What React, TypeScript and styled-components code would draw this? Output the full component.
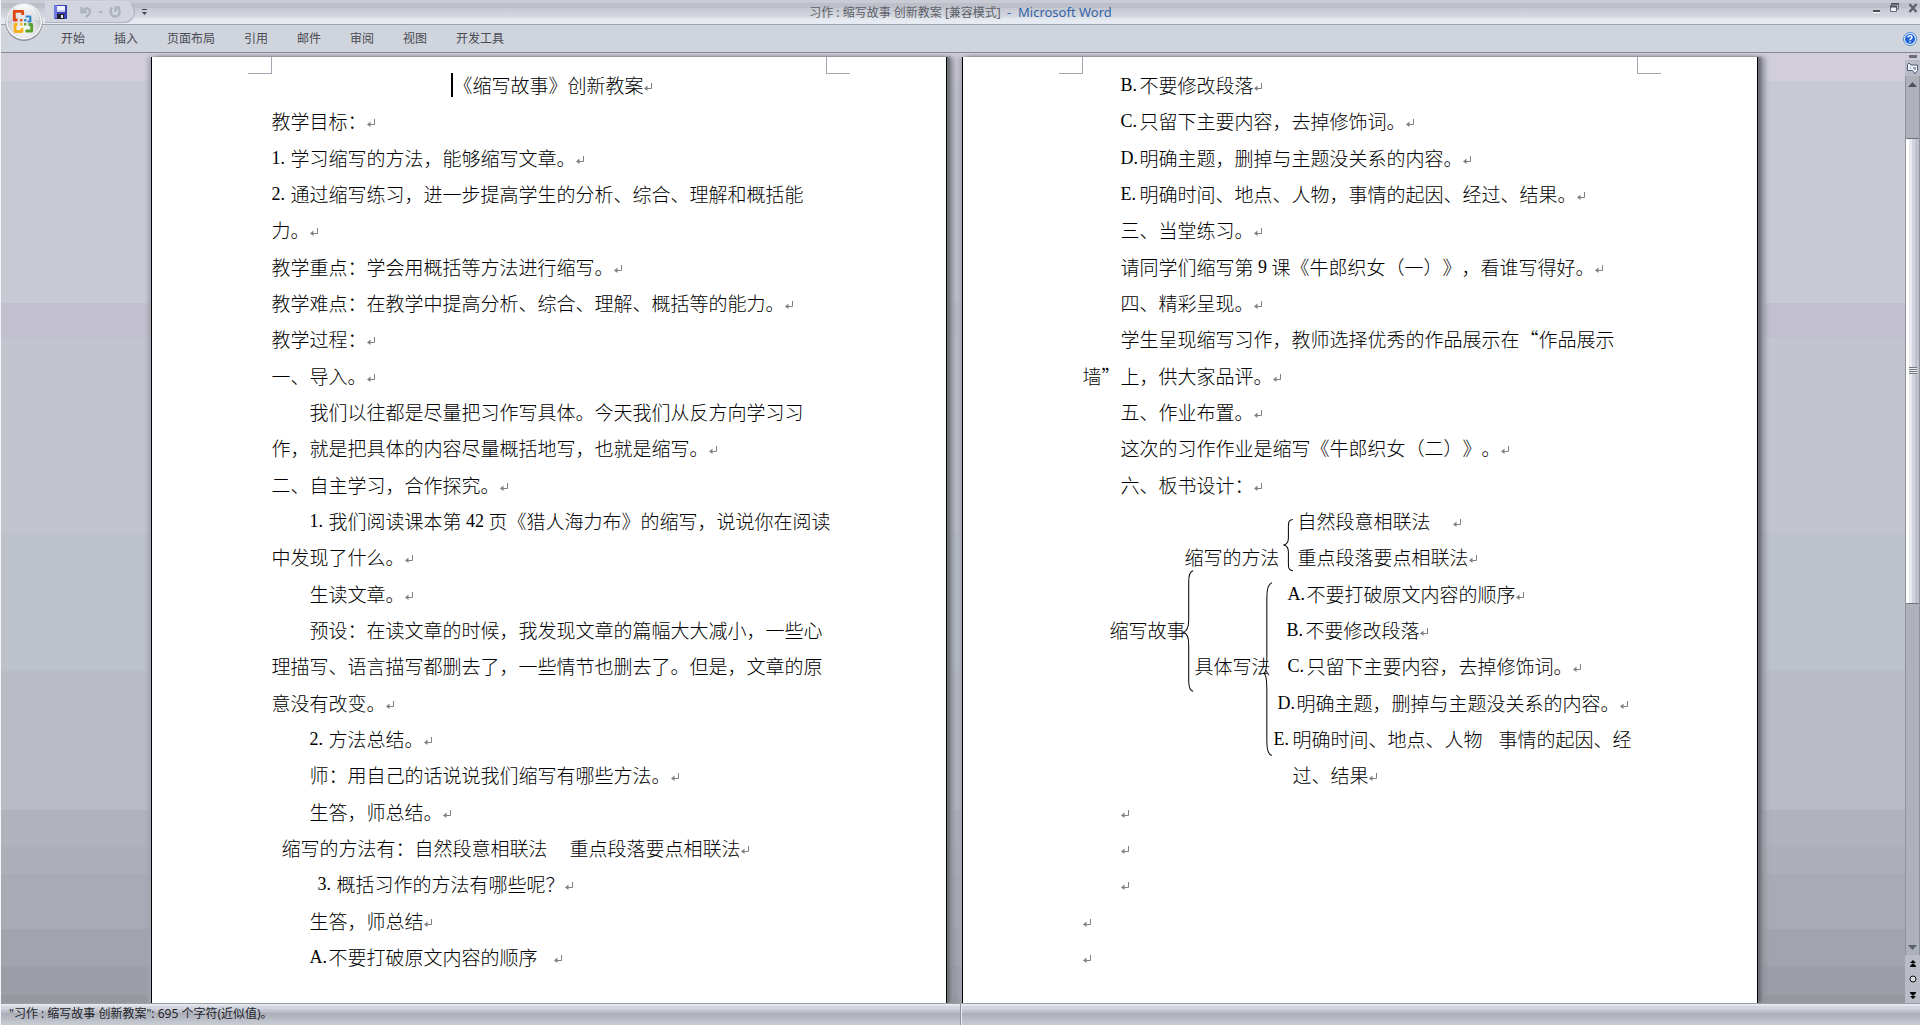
import React from "react";
import styled, { createGlobalStyle } from "styled-components";

const ui = `"Noto Sans", "Noto Sans CJK SC", sans-serif`;
const body = `"Noto Sans CJK SC", sans-serif`;
const latin = `"Liberation Serif", serif`;

const Global = createGlobalStyle`
  * { box-sizing: border-box; }
  body { margin: 0; background: #c7cad3; overflow: hidden; }
  button { font: inherit; color: inherit; border: 0; padding: 0; background: none; cursor: default; }
`;

const Window = styled.div`
  display: flex;
  flex-direction: column;
  height: 100vh;
  border-left: 1px solid #f4f5f8;
  font-family: ${ui};
  font-size: 12px;
`;

const TitleBar = styled.header`
  display: grid;
  grid-template-columns: 1fr auto 1fr;
  align-items: center;
  height: 25px;
  border-bottom: 1px solid #9fa2aa;
  background: linear-gradient(#c9ccd4 0 3px, #bdc0c8 3px 8px, #c6c9d1 8px, #d3d6de 16px, #e0e3e6 18px, #e6eaf2 20px);
  position: relative;
`;

const OfficeButton = styled.button`
  position: absolute;
  left: 3px;
  top: 2px;
  width: 40px;
  height: 40px;
  z-index: 2;
`;

const QuickAccess = styled.div`
  display: flex;
  align-items: center;
  padding-left: 44px;
`;

const QuickTools = styled.div`
  display: flex;
  align-items: center;
  height: 22px;
  width: 90px;
  padding-left: 9px;
  gap: 6px;
  border: 1px solid #b0b3bc;
  border-left: 0;
  border-top-color: #d6d9e0;
  border-radius: 0 11px 11px 0;
  background: #d2d5dd;
`;

const IconButton = styled.button`
  display: grid;
  place-items: center;
  height: 16px;
`;

const Caret = styled(IconButton)`
  margin-left: 7px;
`;

const Caption = styled.h1`
  margin: 0;
  font-size: 12px;
  font-weight: 400;
  line-height: 20px;
  color: #5c5f68;
  white-space: pre;
`;

const AppName = styled.span`
  font-size: 13px;
  color: #3465a8;
`;

const WindowButtons = styled.div`
  display: flex;
  justify-content: flex-end;
  gap: 8px;
  padding: 0 2px 8px 0;
`;

const Ribbon = styled.nav`
  display: flex;
  align-items: center;
  gap: 29px;
  height: 28px;
  padding: 0 3px 0 60px;
  background: #d0d4dc;
  border-bottom: 1px solid #868992;
  color: #484b54;
`;

const Tab = styled.button`
  line-height: 20px;
  font-size: 12px;
`;

const HelpButton = styled(IconButton)`
  margin-left: auto;
`;

const Work = styled.main`
  flex: 1;
  min-height: 0;
  display: flex;
`;

const Desk = styled.div`
  flex: 1;
  min-width: 0;
  display: flex;
  justify-content: center;
  gap: 15px;
  padding: 4px 0 0 2px;
  overflow: hidden;
  background: linear-gradient(
    #d1ceda 0 2.9%, #c7cad3 2.9% 26.3%, #c2bfce 26.3% 30%, #c2c5ce 30% 50.5%,
    #bcc1ca 50.5% 65%, #b9bcc5 65% 79.7%, #b0b3bb 79.7% 83.5%, #adb0b9 83.5% 86.4%,
    #a8abb4 86.4% 92.2%, #a1a4ac 92.2% 96.1%, #9b9ea6 96.1% 99.2%, #96989f 99.2%
  );
`;

const Sheet = styled.article`
  position: relative;
  width: 796px;
  display: grid;
  grid-template-rows: repeat(25, minmax(0, 1fr));
  padding: 10px 80px 28px 120px;
  background: #fff;
  border: solid #000;
  border-width: 0 1px;
  box-shadow: 3px 0 2px #6e7178, 7px 0 5px #90939b, -3px 0 4px #a2a5b0;
  font-family: ${body};
  font-size: 19px;
  font-weight: 300;
  color: #000;
  text-spacing-trim: space-all;
`;

const Crop = styled.span<{ $side: "left" | "right" }>`
  position: absolute;
  top: 0;
  ${(p) => p.$side}: 96px;
  width: 24px;
  height: 17px;
  border-bottom: 1px solid #a5a6b2;
  border-${(p) => (p.$side === "left" ? "right" : "left")}: 1px solid #a5a6b2;
`;

const Line = styled.p<{ $indent?: number; $center?: boolean }>`
  margin: 0;
  display: flex;
  align-items: center;
  white-space: pre;
  line-height: 28px;
  padding-left: ${(p) => p.$indent ?? 0}px;
  ${(p) => p.$center && "justify-content: center; padding-right: 34px;"}
`;

const Marker = styled.span`
  display: inline-block;
  width: 19px;
  font-family: ${latin};
  font-size: 18px;
  font-weight: 400;
`;

const Num = styled.span`
  font-family: ${latin};
  font-size: 18px;
  font-weight: 400;
`;

const Space = styled.span<{ $w: number }>`
  width: ${(p) => p.$w}px;
`;

const Label = styled.span<{ $w: number }>`
  width: ${(p) => p.$w}px;
`;

const Cursor = styled.span`
  width: 2px;
  height: 24px;
  background: #000;
`;

const Diagram = styled.section`
  position: relative;
  grid-row: span 8;
  display: grid;
  grid-template-rows: subgrid;
`;

const Braces = styled.svg`
  position: absolute;
  left: 0;
  top: 0;
  height: 100%;
`;

const PilcrowIcon = styled.svg`
  flex: none;
  margin-top: 4px;
`;

const ScrollRail = styled.aside`
  width: 15px;
  display: flex;
  flex-direction: column;
  background: #b9bcc6;
`;

const SplitHandle = styled.div`
  height: 7px;
  padding: 2px 3px 2px 4px;
  background: #d1ceda;
  &::after { content: ""; display: block; height: 3px; background: #6b6e75; }
`;

const RailButton = styled(IconButton)<{ $h: number }>`
  width: 15px;
  height: ${(p) => p.$h}px;
`;

const Track = styled.div`
  flex: 1;
  display: flex;
  flex-direction: column;
  border-left: 1px solid #8f929a;
  border-right: 1px solid #8f929a;
  background: #aeb1ba;
`;

const TrackButton = styled(IconButton)`
  width: 13px;
`;

const Room = styled.div<{ $grow: number }>`
  flex: ${(p) => p.$grow};
`;

const Thumb = styled.div<{ $grow: number }>`
  flex: ${(p) => p.$grow};
  display: grid;
  place-items: center;
  border: solid #6f727a;
  border-width: 1px 0;
  border-radius: 1px;
  background: linear-gradient(90deg, #fff 0 3px, #e9e9f2 3px 6px, #cfd6e0 6px 9px, #bfc2ca 9px);
`;

const Grip = styled.div`
  width: 8px;
  height: 7px;
  background: repeating-linear-gradient(#777a82 0 1px, #e8eaf0 1px 2px);
`;

const StatusBar = styled.footer`
  display: grid;
  grid-template-columns: 1fr 1fr;
  height: 22px;
  border-top: 1px solid #9c9fa8;
  background: linear-gradient(#e3e6ea 0 2px, #d2d5df 2px 5px, #c0c3cd 6px 8px, #abaeb7 9px, #b4b7c0 13px, #c4c8d1 19px);
  color: #22242a;
`;

const StatusText = styled.div`
  padding-left: 8px;
  line-height: 20px;
  font-size: 12px;
  border-right: 1px solid #8e919a;
`;

const StatusRest = styled.div`
  border-left: 1px solid #eceef3;
`;

const Mark = () => (
  <PilcrowIcon width="8" height="8" viewBox="0 0 8 8" aria-hidden="true">
    <path d="M7.500 0V5.500H2" fill="none" stroke="#808080" />
    <path d="M0 5.500L3.500 2.500V8Z" fill="#808080" />
  </PilcrowIcon>
);

const OfficeLogo = () => (
  <svg width="40" height="40" viewBox="0 0 40 40" aria-hidden="true">
    <defs>
      <radialGradient id="orb" cx="50%" cy="75%" r="70%">
        <stop offset="0" stopColor="#ffffff" />
        <stop offset="0.55" stopColor="#dcdde1" />
        <stop offset="1" stopColor="#a9abb2" />
      </radialGradient>
      <linearGradient id="gloss" x1="0" y1="0" x2="0" y2="1">
        <stop offset="0" stopColor="#fff" />
        <stop offset="1" stopColor="#e2e3e7" stopOpacity="0.6" />
      </linearGradient>
    </defs>
    <circle cx="20" cy="20.500" r="18.500" fill="#8a8d95" />
    <circle cx="20" cy="19.500" r="18" fill="#f4f5f7" />
    <circle cx="20" cy="19.500" r="16.500" fill="url(#orb)" />
    <path d="M4 19a16 16 0 0 1 32 0q-16-5-32 0z" fill="url(#gloss)" />
    <g fill="none" strokeWidth="2.800" strokeLinejoin="round">
      <path d="M13.500 18H10.300V9.300H18.700V13" stroke="#dc4712" />
      <path d="M21.500 14.500H26.300V19.500H23.500" stroke="#2f86cf" strokeWidth="2.200" />
      <path d="M13.500 22.500H11V29.500H18V26" stroke="#f6b01c" />
      <path d="M21.500 29H27.700V22.500H24.500" stroke="#57a32e" />
    </g>
    <path d="M16 17h2.500v2.500H16z" fill="#e4611c" />
    <path d="M20 17h2.500v2.500H20z" fill="#3d90d4" />
    <path d="M16 21h2.500v2.500H16z" fill="#f4b92d" />
    <path d="M20 21h2.500v2.500H20z" fill="#66ab37" />
  </svg>
);

const SaveIcon = () => (
  <svg width="13" height="14" viewBox="0 0 13 14" aria-hidden="true">
    <path d="M0 0H13V14H1L0 13Z" fill="#3c3fb4" />
    <path d="M0 0H3V13H0Z" fill="#6f78dc" />
    <path d="M3 1H11V7H3Z" fill="#f1f4fd" />
    <path d="M3 5H11V7H3Z" fill="#c4cdf0" />
    <path d="M3 9H10V14H3Z" fill="#20232c" />
    <path d="M7 10H9V13H7Z" fill="#eceef4" />
  </svg>
);

const UndoIcon = () => (
  <svg width="12" height="12" viewBox="0 0 12 12" aria-hidden="true">
    <path d="M1.500 1V6H7M2.500 5.500C5 1.500 10 1.500 10 5.500C10 8 8 9.500 6 11" fill="none" stroke="#aeb3c0" strokeWidth="2.400" />
  </svg>
);

const RedoIcon = () => (
  <svg width="12" height="12" viewBox="0 0 12 12" aria-hidden="true">
    <path d="M3 1.500C0 5 2 10.500 6 10.500C10.500 10.500 11.500 6 9.500 2.500M6.500 6V1.500H11" fill="none" stroke="#aeb3c0" strokeWidth="2.400" />
  </svg>
);

const Braced = () => (
  <Braces viewBox="0 0 240 290" aria-hidden="true">
    <g fill="none" stroke="#000">
      <path d="M209.500 16.500C205.500 17 205 19 205 23V35C205 39 204 41.500 200 42C204 42.500 205 45 205 49V61C205 65 205.500 67 209.500 67.500" />
      <path d="M110 67.500C106 68 105.500 74 105.500 79V117C105.500 124 104 128 100 129C104 130 105.500 134 105.500 141V177C105.500 182 106 187.500 110 188" />
      <path d="M188.500 79.500C184.500 81 183.500 87 183.500 94V153C183.500 163 183 169 180.500 170C183 171 183.500 177 183.500 187V238C183.500 245 184.500 251 188.500 252" />
    </g>
  </Braces>
);

const tabs = ["开始", "插入", "页面布局", "引用", "邮件", "审阅", "视图", "开发工具"];

export default function App() {
  return (
    <Window>
      <Global />
      <TitleBar>
        <OfficeButton aria-label="Office 按钮"><OfficeLogo /></OfficeButton>
        <QuickAccess>
          <QuickTools>
            <IconButton aria-label="保存"><SaveIcon /></IconButton>
            <Space $w={1} />
            <IconButton aria-label="撤消"><UndoIcon /></IconButton>
            <IconButton aria-label="撤消列表">
              <svg width="5" height="3" aria-hidden="true"><path d="M0 0H5L2.500 3Z" fill="#aeb3c0" /></svg>
            </IconButton>
            <IconButton aria-label="重复"><RedoIcon /></IconButton>
          </QuickTools>
          <Caret aria-label="自定义快速访问工具栏">
            <svg width="5" height="6" aria-hidden="true"><path d="M0 0H5V1H0ZM0 3H5L2.500 6Z" fill="#44474f" /></svg>
          </Caret>
        </QuickAccess>
        <Caption>习作 : 缩写故事 创新教案 [兼容模式]  <AppName>-  Microsoft Word</AppName></Caption>
        <WindowButtons>
          <IconButton aria-label="最小化">
            <svg width="8" height="10" aria-hidden="true"><path d="M0 7H7V9H0Z" fill="#4b4e56" /><path d="M0 9H7V10H0Z" fill="#fff" /></svg>
          </IconButton>
          <IconButton aria-label="还原">
            <svg width="11" height="10" aria-hidden="true">
              <path d="M2.500 3V1H9.500V6H8" fill="none" stroke="#5e6a80" />
              <path d="M1.500 3.500H7.500V8.500H1.500Z" fill="#eef0f5" stroke="#5e6a80" />
              <path d="M2 .5H10M1 3.500H8" stroke="#4b4e56" strokeWidth="2" />
            </svg>
          </IconButton>
          <IconButton aria-label="关闭">
            <svg width="10" height="10" aria-hidden="true"><path d="M1.500 1L8.500 9M8.500 1L1.500 9" stroke="#5b6373" strokeWidth="2.400" /></svg>
          </IconButton>
        </WindowButtons>
      </TitleBar>
      <Ribbon>
        {tabs.map((t) => <Tab key={t}>{t}</Tab>)}
        <HelpButton aria-label="帮助">
          <svg width="14" height="14" viewBox="0 0 14 14" aria-hidden="true">
            <circle cx="7" cy="7" r="6.500" fill="#e8f2fd" stroke="#4a8ad0" />
            <circle cx="7" cy="7" r="5" fill="#1f5fd8" />
            <path d="M5 5.500C5 3.200 9 3.200 9 5.300C9 6.600 7 6.600 7 8.200M7 9.300V10.600" fill="none" stroke="#fff" strokeWidth="1.500" />
          </svg>
        </HelpButton>
      </Ribbon>
      <Work>
        <Desk>
          <Sheet>
            <Crop $side="left" /><Crop $side="right" />
            <Line $center><Cursor />《缩写故事》创新教案<Mark /></Line>
            <Line>教学目标：<Mark /></Line>
            <Line><Marker>1.</Marker>学习缩写的方法，能够缩写文章。<Mark /></Line>
            <Line><Marker>2.</Marker>通过缩写练习，进一步提高学生的分析、综合、理解和概括能</Line>
            <Line>力。<Mark /></Line>
            <Line>教学重点：学会用概括等方法进行缩写。<Mark /></Line>
            <Line>教学难点：在教学中提高分析、综合、理解、概括等的能力。<Mark /></Line>
            <Line>教学过程：<Mark /></Line>
            <Line>一、导入。<Mark /></Line>
            <Line $indent={38}>我们以往都是尽量把习作写具体。今天我们从反方向学习习</Line>
            <Line>作，就是把具体的内容尽量概括地写，也就是缩写。<Mark /></Line>
            <Line>二、自主学习，合作探究。<Mark /></Line>
            <Line $indent={38}><Marker>1.</Marker>我们阅读课本第<Num> 42 </Num>页《猎人海力布》的缩写，说说你在阅读</Line>
            <Line>中发现了什么。<Mark /></Line>
            <Line $indent={38}>生读文章。<Mark /></Line>
            <Line $indent={38}>预设：在读文章的时候，我发现文章的篇幅大大减小，一些心</Line>
            <Line>理描写、语言描写都删去了，一些情节也删去了。但是，文章的原</Line>
            <Line>意没有改变。<Mark /></Line>
            <Line $indent={38}><Marker>2.</Marker>方法总结。<Mark /></Line>
            <Line $indent={38}>师：用自己的话说说我们缩写有哪些方法。<Mark /></Line>
            <Line $indent={38}>生答，师总结。<Mark /></Line>
            <Line $indent={10}>缩写的方法有：自然段意相联法<Space $w={22} />重点段落要点相联法<Mark /></Line>
            <Line $indent={46}><Marker>3.</Marker>概括习作的方法有哪些呢？<Mark /></Line>
            <Line $indent={38}>生答，师总结<Mark /></Line>
            <Line $indent={38}><Marker>A.</Marker>不要打破原文内容的顺序<Space $w={16} /><Mark /></Line>
          </Sheet>
          <Sheet>
            <Crop $side="left" /><Crop $side="right" />
            <Line $indent={38}><Marker>B.</Marker>不要修改段落<Mark /></Line>
            <Line $indent={38}><Marker>C.</Marker>只留下主要内容，去掉修饰词。<Mark /></Line>
            <Line $indent={38}><Marker>D.</Marker>明确主题，删掉与主题没关系的内容。<Mark /></Line>
            <Line $indent={38}><Marker>E.</Marker>明确时间、地点、人物，事情的起因、经过、结果。<Mark /></Line>
            <Line $indent={38}>三、当堂练习。<Mark /></Line>
            <Line $indent={38}>请同学们缩写第<Num> 9 </Num>课《牛郎织女（一）》，看谁写得好。<Mark /></Line>
            <Line $indent={38}>四、精彩呈现。<Mark /></Line>
            <Line $indent={38}>学生呈现缩写习作，教师选择优秀的作品展示在“作品展示</Line>
            <Line>墙”上，供大家品评。<Mark /></Line>
            <Line $indent={38}>五、作业布置。<Mark /></Line>
            <Line $indent={38}>这次的习作作业是缩写《牛郎织女（二）》。<Mark /></Line>
            <Line $indent={38}>六、板书设计：<Mark /></Line>
            <Diagram>
              <Line $indent={215}>自然段意相联法<Space $w={22} /><Mark /></Line>
              <Line $indent={102}><Label $w={113}>缩写的方法</Label>重点段落要点相联法<Mark /></Line>
              <Line $indent={205}><Marker>A.</Marker>不要打破原文内容的顺序<Mark /></Line>
              <Line $indent={27}><Label $w={177}>缩写故事</Label><Marker>B.</Marker>不要修改段落<Mark /></Line>
              <Line $indent={112}><Label $w={93}>具体写法</Label><Marker>C.</Marker>只留下主要内容，去掉修饰词。<Mark /></Line>
              <Line $indent={195}><Marker>D.</Marker>明确主题，删掉与主题没关系的内容。<Mark /></Line>
              <Line $indent={191}><Marker>E.</Marker>明确时间、地点、人物<Space $w={16} />事情的起因、经</Line>
              <Line $indent={210}>过、结果<Mark /></Line>
              <Braced />
            </Diagram>
            <Line $indent={38}><Mark /></Line>
            <Line $indent={38}><Mark /></Line>
            <Line $indent={38}><Mark /></Line>
            <Line><Mark /></Line>
            <Line><Mark /></Line>
          </Sheet>
        </Desk>
        <ScrollRail>
          <SplitHandle />
          <RailButton $h={16} aria-label="标尺">
            <svg width="13" height="13" viewBox="0 0 13 13" aria-hidden="true">
              <path d="M1.500 2.500L3 1L5 3H11.500V8.500L9 12L6.500 8.500H1.500V5Z" fill="#eef1f8" stroke="#4d5b75" />
              <path d="M4 6H5M7 6H8M9 5V8" stroke="#4d5b75" />
            </svg>
          </RailButton>
          <Track>
            <TrackButton aria-label="向上滚动">
              <svg width="9" height="5" aria-hidden="true"><path d="M0 5L4.500 0L9 5Z" fill="#4f535d" /></svg>
            </TrackButton>
            <Room $grow={46} />
            <Thumb $grow={465}><Grip /></Thumb>
            <Room $grow={336} />
            <TrackButton aria-label="向下滚动">
              <svg width="9" height="5" aria-hidden="true"><path d="M0 0H9L4.500 5Z" fill="#56606c" /></svg>
            </TrackButton>
          </Track>
          <RailButton $h={16} aria-label="前一页">
            <svg width="6" height="7" aria-hidden="true"><path d="M0 3L3 0L6 3ZM0 6L3 3L6 6ZM0 6H6V7H0Z" fill="#000" /></svg>
          </RailButton>
          <RailButton $h={16} aria-label="选择浏览对象">
            <svg width="8" height="8" aria-hidden="true"><circle cx="4" cy="4" r="3" fill="#d9dade" stroke="#111" /></svg>
          </RailButton>
          <RailButton $h={16} aria-label="下一页">
            <svg width="6" height="7" aria-hidden="true"><path d="M0 0H6V1H0ZM0 1H6L3 4ZM0 4H6L3 7Z" fill="#000" /></svg>
          </RailButton>
        </ScrollRail>
      </Work>
      <StatusBar>
        <StatusText>"习作 : 缩写故事 创新教案": 695 个字符(近似值)。</StatusText>
        <StatusRest />
      </StatusBar>
    </Window>
  );
}
